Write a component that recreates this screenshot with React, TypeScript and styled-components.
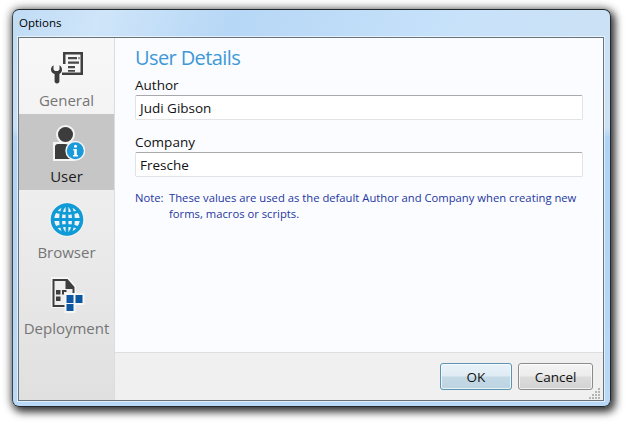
import styled, { createGlobalStyle } from "styled-components";

const GlobalStyle = createGlobalStyle`
  html, body {
    margin: 0;
    padding: 0;
    background: #ffffff;
    font-family: "Open Sans", "Noto Sans", sans-serif;
  }
`;

const GeneralIcon = () => (
  <svg width="36" height="36" viewBox="0 0 36 36">
    <path d="M14 3h20v23H13v-2.500h18.500V5.500h-15V15H14z" fill="#404040" />
    <path d="M19 8h9v2.200h-9zM29.500 8h1v2.200h-1zM19 12.500h11v2.200H19zM19 17h7v2.200h-7zM19 21h7v1.800h-7z" fill="#484848" />
    <path d="M2 20.500c0-2 1-3.500 2.500-4.300v4.300l1.500 1.500h3l1.500-1.500v-4.300c1.500.8 2.500 2.300 2.500 4.300 0 2.200-1 3.700-2.600 4.500v7.300c0 1.300-1 2.200-2.400 2.200s-2.400-.9-2.400-2.200V25C3 24.200 2 22.700 2 20.500z" fill="#3c3c3c" />
  </svg>
);

const UserIcon = () => (
  <svg width="36" height="36" viewBox="0 0 36 36">
    <circle cx="16.500" cy="9.500" r="9.500" fill="#f4f4f4" />
    <rect x="4" y="17" width="22" height="19" fill="#f4f4f4" />
    <circle cx="16.500" cy="9.500" r="7.500" fill="#3c3c3c" />
    <path d="M6 34V22c0-2 1-3 3-3h7c2 0 4 1 5 3v12z" fill="#3c3c3c" />
    <circle cx="26.300" cy="25.800" r="10" fill="#f4f4f4" />
    <circle cx="26.300" cy="25.800" r="8.500" fill="#1a9ad8" />
    <circle cx="26.500" cy="21.300" r="1.500" fill="#ffffff" />
    <path d="M24.300 24h3.500v6h1.200v1.500h-5v-1.500h1.200v-4.500h-.9z" fill="#ffffff" />
  </svg>
);

const BrowserIcon = () => (
  <svg width="36" height="36" viewBox="0 0 36 36" fill="none">
    <circle cx="18" cy="18.500" r="17.500" fill="#f2f2f2" />
    <g stroke="#0f9bd7" strokeWidth="2.800">
      <circle cx="18" cy="18.500" r="14.500" strokeWidth="3.600" />
      <ellipse cx="18" cy="18.500" rx="6.500" ry="14.500" />
      <path d="M18 4v29M3.500 18.500h29M6.500 10.500c7 2.500 16 2.500 23 0M6.500 26.500c7-2.500 16-2.500 23 0" />
    </g>
  </svg>
);

const DeploymentIcon = () => (
  <svg width="36" height="36" viewBox="0 0 36 36">
    <path d="M2 0h17l8 9v7h8v11h-9v9H16v-5H2z" fill="#f6f6f6" />
    <path d="M3.500 2h15l7 8v20h-22z" fill="#3e3e3e" />
    <path d="M5.500 4h11v8h7v16h-18z" fill="#efefef" />
    <path d="M7 13h4.500v4.500H7zM7 19.500h4.500V24H7zM13 13h4.500v2h-2.500v2.500h-2z" fill="#3e3e3e" />
    <rect x="15.500" y="16" width="20" height="12" fill="#f6f6f6" />
    <rect x="15.500" y="25" width="11" height="11" fill="#f6f6f6" />
    <path d="M17.500 18h7v8h-7zM26.500 18h7v8h-7zM17.500 27h7v7h-7z" fill="#0c57a0" />
  </svg>
);

const navItems = [
  { label: "General", icon: <GeneralIcon />, active: false },
  { label: "User", icon: <UserIcon />, active: true },
  { label: "Browser", icon: <BrowserIcon />, active: false },
  { label: "Deployment", icon: <DeploymentIcon />, active: false },
];

export const App = () => {
  return (
    <>
      <GlobalStyle />
      <Page>
        <Window>
          <TitleBar>Options</TitleBar>
          <Client>
            <Sidebar>
              {navItems.map((item) => (
                <NavItem key={item.label} $active={item.active}>
                  <NavIcon>{item.icon}</NavIcon>
                  <NavLabel $active={item.active}>{item.label}</NavLabel>
                </NavItem>
              ))}
            </Sidebar>
            <Main>
              <Content>
                <Heading>User Details</Heading>
                <Field>
                  <FieldLabel>Author</FieldLabel>
                  <TextBox>Judi Gibson</TextBox>
                </Field>
                <Field>
                  <FieldLabel>Company</FieldLabel>
                  <TextBox>Fresche</TextBox>
                </Field>
                <Note>
                  <span>Note:</span>
                  <span>
                    These values are used as the default Author and Company when creating new forms, macros or scripts.
                  </span>
                </Note>
              </Content>
              <Footer>
                <Button $primary>OK</Button>
                <Button>Cancel</Button>
                <Grip>
                  <svg width="12" height="12" viewBox="0 0 12 12" fill="#b4b4b4">
                    <path d="M9 0h2v2H9zM6 3h2v2H6zM9 3h2v2H9zM3 6h2v2H3zM6 6h2v2H6zM9 6h2v2H9zM0 9h2v2H0zM3 9h2v2H3zM6 9h2v2H6zM9 9h2v2H9z" />
                  </svg>
                </Grip>
              </Footer>
            </Main>
          </Client>
        </Window>
      </Page>
    </>
  );
};

export default App;

const Page = styled.div`
  width: 628px;
  height: 427px;
  padding: 9px 0 0 12px;
  box-sizing: border-box;
  overflow: hidden;
`;

const Window = styled.div`
  width: 599px;
  height: 398px;
  box-sizing: border-box;
  display: flex;
  flex-direction: column;
  padding: 0 6px 5px 5px;
  border: 1px solid #23282c;
  border-left-color: #3c444a;
  border-radius: 7px;
  background:
    linear-gradient(180deg, transparent 0, transparent 118px, #aed3f5 128px, #b9d9f6 100%),
    linear-gradient(110deg, #bfdcf5 0%, #cfe5f9 12%, #b6d7f6 30%, #c8e2fa 62%, #cbe1f5 82%, #cfe3f6 100%);
  box-shadow: 3px 4px 9px 1px rgba(0, 0, 0, 0.72), 0 0 10px 1px rgba(0, 0, 0, 0.4);
`;

const TitleBar = styled.div`
  height: 27px;
  box-sizing: border-box;
  flex: none;
  display: flex;
  align-items: center;
  padding: 0 0 3px 1px;
  font-size: 11.500px;
  color: #000000;
`;

const Client = styled.div`
  flex: 1;
  display: flex;
  min-height: 0;
  border: 1px solid #68727a;
  box-shadow: 0 0 0 1px rgba(255, 255, 255, 0.6);
`;

const Sidebar = styled.div`
  width: 95px;
  flex: none;
  display: flex;
  flex-direction: column;
  border-right: 1px solid #dddddd;
  background: linear-gradient(180deg, #f8f8f8 0%, #e0e0e0 100%);
`;

const NavItem = styled.div<{ $active: boolean }>`
  height: 76px;
  flex: none;
  display: flex;
  flex-direction: column;
  align-items: center;
  background: ${(p) => (p.$active ? "#c6c6c6" : "transparent")};
`;

const NavIcon = styled.div`
  height: 36px;
  margin-top: 11px;
  display: flex;
  align-items: center;
  justify-content: center;
`;

const NavLabel = styled.div<{ $active: boolean }>`
  margin-top: 5px;
  font-size: 15px;
  line-height: 20px;
  white-space: nowrap;
  color: ${(p) => (p.$active ? "#1c1c1c" : "#757575")};
`;

const Main = styled.div`
  flex: 1;
  min-width: 0;
  display: flex;
  flex-direction: column;
  background: #fbfcff;
`;

const Content = styled.div`
  flex: 1;
  padding: 6px 20px 0 20px;
`;

const Heading = styled.h1`
  margin: 0 0 6px;
  font-size: 20px;
  font-weight: 400;
  line-height: 27px;
  letter-spacing: -0.6px;
  color: #3e98d8;
`;

const Field = styled.div`
  margin-bottom: 14px;
`;

const FieldLabel = styled.div`
  font-size: 13.500px;
  line-height: 18px;
  margin-top: -1px;
  padding-bottom: 1px;
  color: #111111;
`;

const TextBox = styled.div`
  height: 25px;
  box-sizing: border-box;
  padding-left: 4px;
  display: flex;
  align-items: center;
  font-size: 13.500px;
  color: #111111;
  background: #ffffff;
  border: 1px solid #e2e3e6;
  border-top-color: #a9a9ab;
  border-radius: 2px;
`;

const Note = styled.div`
  margin-top: -1px;
  display: grid;
  grid-template-columns: 34px 1fr;
  font-size: 11.250px;
  line-height: 16px;
  color: #24369f;
`;

const Footer = styled.div`
  height: 48px;
  flex: none;
  position: relative;
  display: flex;
  justify-content: flex-end;
  gap: 6px;
  padding: 10px 10px 0 0;
  box-sizing: border-box;
  background: #f0f0f0;
  border-top: 1px solid #dfdfdf;
`;

const Button = styled.div<{ $primary?: boolean }>`
  width: ${(p) => (p.$primary ? "72px" : "75px")};
  height: 27px;
  box-sizing: border-box;
  display: flex;
  align-items: center;
  justify-content: center;
  font-size: 13.500px;
  color: #111111;
  border-radius: 3px;
  border: 1px solid ${(p) => (p.$primary ? "#5b93b3" : "#8c8c8c")};
  box-shadow: inset 0 0 0 1px rgba(255, 255, 255, 0.7);
  background: ${(p) =>
    p.$primary
      ? "linear-gradient(180deg, #e9f2f8 0%, #dfebf3 48%, #c3d9e6 52%, #bdd4e2 100%)"
      : "linear-gradient(180deg, #f4f4f4 0%, #ececec 48%, #dcdcdc 52%, #d2d2d2 100%)"};
`;

const Grip = styled.div`
  position: absolute;
  right: 2px;
  bottom: 0;
  line-height: 0;
`;
